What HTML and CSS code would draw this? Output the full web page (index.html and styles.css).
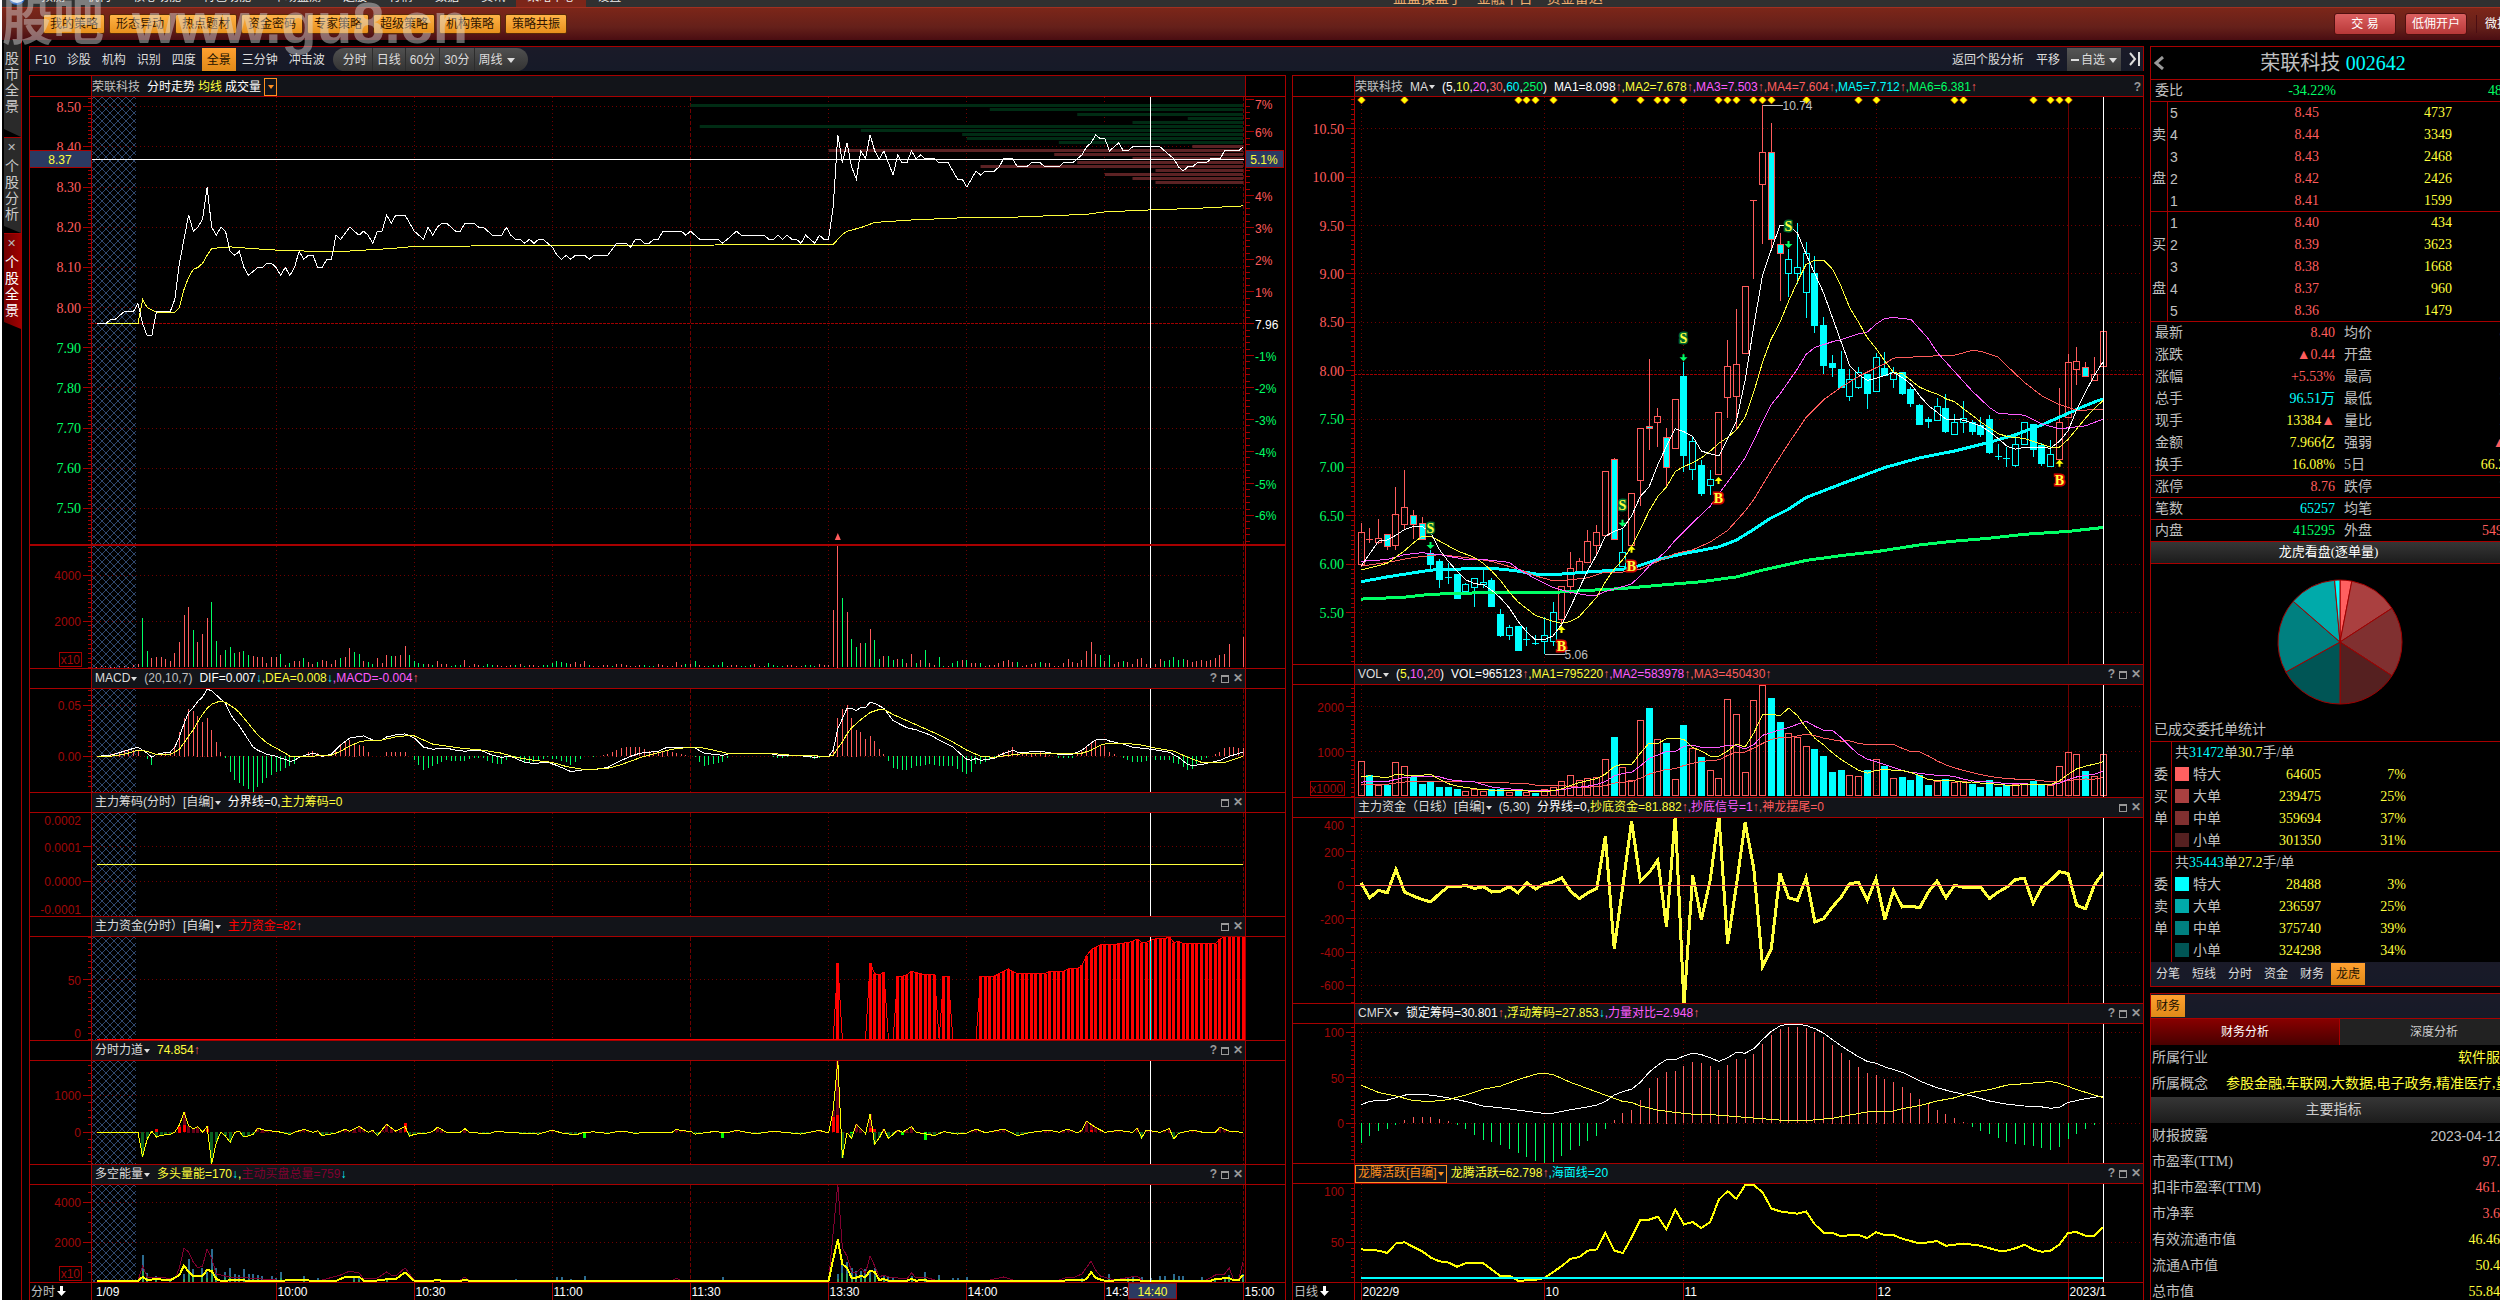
FILE: index.html
```html
<!DOCTYPE html>
<html lang="zh-CN">
<head>
    <meta charset="UTF-8">
    <meta name="viewport" content="width=device-width, initial-scale=1.0">
    <title>荣联科技 002642 - 个股全景</title>
    <link rel="stylesheet" href="styles.css">
</head>
<body>
    <nav class="menubar">
        <svg class="logo" viewBox="0 0 20 20"><circle cx="10" cy="10" r="9" fill="#1d5fc4"/><path d="M3 12q7 6 14 0" stroke="#e8f2ff" stroke-width="3" fill="none"/></svg>
        <a href="#">预测</a><a href="#">机构</a><a href="#">核心功能</a><a href="#">特色功能</a><a href="#">市场监测</a><a href="#">选股</a><a href="#">行情</a><a href="#">数据</a><a href="#">资讯</a><a href="#" class="current">策略中心</a><a href="#">设置</a>
        <span class="app-title">益盟操盘手　金融平台　资金雷达</span>
    </nav>

    <header class="banner">
        <div class="strategies">
            <button>我的策略</button><button>形态异动</button><button>热点题材</button><button>资金密码</button><button>专家策略</button><button>超级策略</button><button>机构策略</button><button>策略共振</button>
        </div>
        <div class="trade">
            <button>交 易</button><button>低佣开户</button><a href="#">微投顾</a>
        </div>
        <div class="watermark"><span>股吧</span><span>www.gu8.cn</span></div>
    </header>

    <div class="workspace">
        <aside class="side-tabs">
            <a href="#" class="side-tab first">股市全景</a>
            <a href="#" class="side-tab"><i>✕</i>个股分析</a>
            <a href="#" class="side-tab active"><i>✕</i>个股全景</a>
        </aside>

        <main class="main">
            <div class="toolbar">
                <a href="#">F10</a><a href="#">诊股</a><a href="#">机构</a><a href="#">识别</a><a href="#">四度</a><a href="#" class="on">全景</a><a href="#">三分钟</a><a href="#">冲击波</a>
                <div class="periods">
                    <button>分时</button><button>日线</button><button>60分</button><button>30分</button>
                    <span class="picker"><select aria-label="周期"><option>周线</option></select></span>
                </div>
                <div class="toolbar-right">
                    <a href="#">返回个股分析</a><a href="#">平移</a>
                    <span class="picker watch"><b></b><select aria-label="自选"><option>自选</option></select></span>
                    <button class="skip" aria-label="展开"><svg viewBox="0 0 12 14"><path d="M1 1l5 6-5 6M10 0v14" fill="none" stroke="#ddd" stroke-width="2"/></svg></button>
                </div>
            </div>

            <div class="charts">
                <section class="panel intraday">
                    <div class="title"><span class="dim">荣联科技</span><span class="gap w">分时走势</span><span class="y sp">均线</span><span class="w sp">成交量</span><button class="drop" aria-label="指标"></button></div>
                    <svg class="pane h447" id="price"></svg>
                    <svg class="pane vol h122" id="vol"></svg>
                    <div class="title"><span class="d">MACD</span><i class="caret"></i><span class="gap dim">(20,10,7)</span><span class="gap w">DIF=0.007</span><span class="c">↓</span><span class="y">,DEA=0.008</span><span class="c">↓</span><span class="m">,MACD=-0.004</span><span class="r">↑</span><div class="tools"><button>?</button><button class="max" aria-label="最大化"></button><button>✕</button></div></div>
                    <svg class="pane h103" id="macd"></svg>
                    <div class="title"><span class="d">主力筹码(分时）[自编]</span><i class="caret"></i><span class="gap w">分界线=0,</span><span class="y">主力筹码=0</span><div class="tools"><button class="max" aria-label="最大化"></button><button>✕</button></div></div>
                    <svg class="pane h103" id="chips"></svg>
                    <div class="title"><span class="d">主力资金(分时）[自编]</span><i class="caret"></i><span class="gap rr">主力资金=82</span><span class="r">↑</span><div class="tools"><button class="max" aria-label="最大化"></button><button>✕</button></div></div>
                    <svg class="pane h103" id="fund"></svg>
                    <div class="title"><span class="d">分时力道</span><i class="caret"></i><span class="gap y">74.854</span><span class="r">↑</span><div class="tools"><button>?</button><button class="max" aria-label="最大化"></button><button>✕</button></div></div>
                    <svg class="pane h103" id="force"></svg>
                    <div class="title"><span class="d">多空能量</span><i class="caret"></i><span class="gap y">多头量能=170</span><span class="c">↓</span><span class="y">,</span><span class="mr">主动买盘总量=759</span><span class="c">↓</span><div class="tools"><button>?</button><button class="max" aria-label="最大化"></button><button>✕</button></div></div>
                    <svg class="pane h97" id="energy"></svg>
                    <svg class="times" id="times"></svg>
                </section>

                <section class="panel daily">
                    <div class="title"><span class="dim">荣联科技</span><span class="gap d">MA</span><i class="caret"></i><span class="gap w">(5,<em class="y">10</em>,<em class="m">20</em>,<em class="r">30</em>,<em class="c">60</em>,<em class="g">250</em>)</span><span class="gap w">MA1=8.098</span><span class="r">↑</span><span class="y">,MA2=7.678</span><span class="r">↑</span><span class="m">,MA3=7.503</span><span class="r">↑,MA4=7.604↑</span><span class="c">,MA5=7.712</span><span class="r">↑</span><span class="g">,MA6=6.381</span><span class="r">↑</span><div class="tools"><button>?</button></div></div>
                    <svg class="pane h567" id="kline"></svg>
                    <div class="title"><span class="d">VOL</span><i class="caret"></i><span class="gap w">(<em class="y">5</em>,<em class="m">10</em>,<em class="r">20</em>)</span><span class="gap w">VOL=965123</span><span class="r">↑</span><span class="y">,MA1=795220</span><span class="r">↑</span><span class="m">,MA2=583978</span><span class="r">↑,MA3=450430↑</span><div class="tools"><button>?</button><button class="max" aria-label="最大化"></button><button>✕</button></div></div>
                    <svg class="pane h112" id="kvol"></svg>
                    <div class="title"><span class="d">主力资金（日线）[自编]</span><i class="caret"></i><span class="gap d">(5,30)</span><span class="gap w">分界线=0,</span><span class="y">抄底资金=81.882</span><span class="r">↑</span><span class="m">,抄底信号=1</span><span class="r">↑,神龙摆尾=0</span><div class="tools"><button class="max" aria-label="最大化"></button><button>✕</button></div></div>
                    <svg class="pane h185" id="kfund"></svg>
                    <div class="title"><span class="d">CMFX</span><i class="caret"></i><span class="gap w">锁定筹码=30.801</span><span class="r">↑</span><span class="y">,浮动筹码=27.853</span><span class="c">↓</span><span class="m">,力量对比=2.948</span><span class="r">↑</span><div class="tools"><button>?</button><button class="max" aria-label="最大化"></button><button>✕</button></div></div>
                    <svg class="pane h139" id="cmfx"></svg>
                    <div class="title"><button class="chosen">龙腾活跃[自编]<i class="caret"></i></button><span class="y">龙腾活跃=62.798</span><span class="r">↑</span><span class="c">,海面线=20</span><div class="tools"><button>?</button><button class="max" aria-label="最大化"></button><button>✕</button></div></div>
                    <svg class="pane h98" id="active"></svg>
                    <svg class="times" id="dates"></svg>
                </section>
            </div>
        </main>

        <aside class="quote">
            <section class="box">
                <div class="stock"><button class="back" aria-label="上一只"><svg viewBox="0 0 10 14"><path d="M9 1L2 7l7 6" fill="none" stroke="#999" stroke-width="3"/></svg></button><h1>荣联科技 <span>002642</span></h1></div>
                <table class="ratio ruled"><tr><td>委比</td><td class="g">-34.22%</td><td class="g">48652</td></tr></table>
                <table class="book ruled">
                    <tr><th></th><td>5</td><td>8.45</td><td>4737</td><td></td></tr>
                    <tr><th>卖</th><td>4</td><td>8.44</td><td>3349</td><td></td></tr>
                    <tr><th></th><td>3</td><td>8.43</td><td>2468</td><td></td></tr>
                    <tr><th>盘</th><td>2</td><td>8.42</td><td>2426</td><td></td></tr>
                    <tr><th></th><td>1</td><td>8.41</td><td>1599</td><td></td></tr>
                </table>
                <table class="book ruled">
                    <tr><th></th><td>1</td><td>8.40</td><td>434</td><td></td></tr>
                    <tr><th>买</th><td>2</td><td>8.39</td><td>3623</td><td></td></tr>
                    <tr><th></th><td>3</td><td>8.38</td><td>1668</td><td></td></tr>
                    <tr><th>盘</th><td>4</td><td>8.37</td><td>960</td><td></td></tr>
                    <tr><th></th><td>5</td><td>8.36</td><td>1479</td><td></td></tr>
                </table>
                <table class="detail">
                    <tr><th>最新</th><td class="r">8.40</td><th>均价</th><td class="r">8.25</td></tr>
                    <tr><th>涨跌</th><td class="r">▲0.44</td><th>开盘</th><td class="r">7.98</td></tr>
                    <tr><th>涨幅</th><td class="r">+5.53%</td><th>最高</th><td class="r">8.43</td></tr>
                    <tr><th>总手</th><td class="c">96.51万</td><th>最低</th><td class="g">7.93</td></tr>
                    <tr><th>现手</th><td class="y">13384<em class="r">▲</em></td><th>量比</th><td class="r">2.47</td></tr>
                    <tr><th>金额</th><td class="y">7.966亿</td><th>强弱</th><td class="r">▲6.1</td></tr>
                    <tr class="line"><th>换手</th><td class="y">16.08%</td><th>5日</th><td class="y">66.25%</td></tr>
                    <tr class="line"><th>涨停</th><td class="r">8.76</td><th>跌停</th><td class="g">7.16</td></tr>
                    <tr class="line"><th>笔数</th><td class="c">65257</td><th>均笔</th><td class="c">14.8</td></tr>
                    <tr class="line"><th>内盘</th><td class="g">415295</td><th>外盘</th><td class="r">549828</td></tr>
                </table>
                <h2 class="bar">龙虎看盘(逐单量)</h2>
                <div class="pie"><svg id="pie" viewBox="-63 -63 126 126"></svg></div>
                <h3>已成交委托单统计</h3>
                <table class="orders ruled">
                    <colgroup><col class="who"><col class="kind"><col class="lots"><col class="share"><col></colgroup>
                    <tr><th></th><td colspan="4" class="sum">共<em class="c">31472</em>单<em class="y">30.7</em>手/单</td></tr>
                    <tr><th>委</th><td><i class="sw b1"></i>特大</td><td>64605</td><td>7%</td><td></td></tr>
                    <tr><th>买</th><td><i class="sw b2"></i>大单</td><td>239475</td><td>25%</td><td></td></tr>
                    <tr><th>单</th><td><i class="sw b3"></i>中单</td><td>359694</td><td>37%</td><td></td></tr>
                    <tr><th></th><td><i class="sw b4"></i>小单</td><td>301350</td><td>31%</td><td></td></tr>
                </table>
                <table class="orders">
                    <colgroup><col class="who"><col class="kind"><col class="lots"><col class="share"><col></colgroup>
                    <tr><th></th><td colspan="4" class="sum">共<em class="c">35443</em>单<em class="y">27.2</em>手/单</td></tr>
                    <tr><th>委</th><td><i class="sw s1"></i>特大</td><td>28488</td><td>3%</td><td></td></tr>
                    <tr><th>卖</th><td><i class="sw s2"></i>大单</td><td>236597</td><td>25%</td><td></td></tr>
                    <tr><th>单</th><td><i class="sw s3"></i>中单</td><td>375740</td><td>39%</td><td></td></tr>
                    <tr><th></th><td><i class="sw s4"></i>小单</td><td>324298</td><td>34%</td><td></td></tr>
                </table>
                <div class="tabs"><a href="#">分笔</a><a href="#">短线</a><a href="#">分时</a><a href="#">资金</a><a href="#">财务</a><a href="#" class="on">龙虎</a></div>
            </section>

            <section class="box finance">
                <div class="tabs"><a href="#" class="on">财务</a></div>
                <div class="switch"><button class="active">财务分析</button><button>深度分析</button></div>
                <table class="facts about">
                    <tr><th>所属行业</th><td class="y">软件服务</td></tr>
                    <tr><th>所属概念</th><td class="y concepts">参股金融,车联网,大数据,电子政务,精准医疗,量子</td></tr>
                </table>
                <h2 class="bar tall">主要指标</h2>
                <table class="facts">
                    <tr><th>财报披露</th><td class="date">2023-04-12</td></tr>
                    <tr><th>市盈率(TTM)</th><td class="r">97.93</td></tr>
                    <tr><th>扣非市盈率(TTM)</th><td class="r">461.76</td></tr>
                    <tr><th>市净率</th><td class="r">3.692</td></tr>
                    <tr><th>有效流通市值</th><td class="y">46.46亿</td></tr>
                    <tr><th>流通A市值</th><td class="y">50.4亿</td></tr>
                    <tr><th>总市值</th><td class="y">55.84亿</td></tr>
                </table>
            </section>
        </aside>
    </div>

    <script src="charts.js"></script>
</body>
</html>
```
FILE: styles.css
```css
:root {
    --line: #a80000;
    --red: #ff5c5c;
    --green: #00ff66;
    --cyan: #00ffff;
    --yellow: #ffff3c;
    --magenta: #ff5cff;
    --dim: #c0c0c0;
    --sans: "Liberation Sans", "Noto Sans CJK SC", sans-serif;
    --serif: "Liberation Serif", "Noto Sans CJK SC", serif;
}

* {
    box-sizing: border-box;
}

body {
    margin: 0;
    height: 100vh;
    overflow: hidden;
    display: flex;
    flex-direction: column;
    background: #000;
    color: var(--dim);
    font: 12px/18px var(--sans);
    border-left: 2px solid #fff;
}

a {
    color: inherit;
    text-decoration: none;
}

button,
select {
    margin: 0;
    padding: 0;
    border: 0;
    background: none;
    color: inherit;
    font: inherit;
    appearance: none;
}

em,
i {
    font-style: normal;
}

.w { color: #fff; }
.d { color: #ddd; }
.dim { color: var(--dim); }
.y { color: var(--yellow); }
.r { color: var(--red); }
.g { color: var(--green); }
.c { color: var(--cyan); }
.m { color: var(--magenta); }
.rr { color: #ff0000; }
.mr { color: #800030; }

/* top bars */
.menubar {
    flex: none;
    height: 7px;
    display: flex;
    align-items: flex-end;
    overflow: hidden;
    background: #303030;
    color: #eee;
    line-height: 12px;
    padding-bottom: 4px;
    position: relative;
}

.logo {
    width: 18px;
    height: 18px;
    flex: none;
    margin: 0 0 -3px 6px;
}

.menubar a {
    padding: 0 11px;
}

.menubar a:first-of-type {
    margin-left: 4px;
}

.menubar .current {
    background: #7c2619;
    box-shadow: 0 4px #7c2619;
}

.app-title {
    position: absolute;
    left: 1390px;
    left: calc(55.6% + 2px);
    bottom: 3px;
    font-size: 14px;
    color: #f0b070;
}

.banner {
    flex: none;
    height: 33px;
    display: flex;
    justify-content: space-between;
    align-items: center;
    border-top: 1px solid #a03020;
    background: linear-gradient(#7c2619, #65201a 60%, #4a0d12);
    position: relative;
}

.strategies {
    display: flex;
    gap: 4px;
    padding-left: 41px;
}

.strategies button {
    width: 62px;
    height: 20px;
    border: 1px solid #5a2a08;
    border-radius: 2px;
    background: linear-gradient(#ffb347, #e8901c);
    color: #301400;
}

.trade {
    display: flex;
    align-items: center;
    gap: 9px;
    color: #fff;
    white-space: nowrap;
    width: 166px;
}

.trade button {
    flex: none;
    width: 62px;
    height: 22px;
    border: 1px solid #50100f;
    border-radius: 3px;
    background: linear-gradient(#dc6060, #b83838);
}

.trade a {
    border-left: 1px solid #4a0d12;
    padding-left: 8px;
}

.watermark {
    position: absolute;
    left: 0;
    top: -9px;
    display: flex;
    gap: 28px;
    font-weight: bold;
    font-size: 58px;
    line-height: 48px;
    color: rgba(220, 220, 220, 0.45);
    pointer-events: none;
    z-index: 2;
}

.watermark span:first-child {
    font-size: 51px;
}

/* body */
.workspace {
    flex: 1;
    min-height: 0;
    display: flex;
}

.side-tabs {
    flex: none;
    width: 20px;
    margin-right: 7px;
    padding-left: 2px;
    border-right: 1px solid var(--line);
}

.side-tab {
    display: block;
    height: 96px;
    padding: 20px 1px 0 0;
    background: #2a2a2a;
    border-top: 1px solid var(--line);
    clip-path: polygon(0 0, 100% 0, 100% 100%, 0 89px);
    font-size: 14px;
    line-height: 16px;
    text-align: center;
    word-break: break-all;
    color: #ccc;
    position: relative;
}

.side-tab.first {
    height: 97px;
    padding-top: 10px;
    border-top: 0;
}

.side-tab i {
    position: absolute;
    top: 1px;
    left: 3px;
    font-size: 11px;
    color: #bbb;
}

.side-tab.active {
    background: linear-gradient(90deg, #700000, #a00000);
    color: #fff;
}

.main {
    flex: 1;
    min-width: 0;
    display: flex;
    flex-direction: column;
    margin: 6px 6px 0 0;
}

.toolbar {
    flex: none;
    height: 25px;
    display: flex;
    align-items: center;
    background: linear-gradient(#1a1a28, #161a28);
    border: solid var(--line);
    border-width: 1px 1px 0;
    margin-bottom: 4px;
    color: #ddd;
}

.toolbar > a {
    padding: 2px 5px 0;
    line-height: 21px;
    margin-right: 1px;
}

.on {
    background: linear-gradient(#ffa030, #e08a18);
    color: #201000;
}

.periods {
    height: 23px;
    display: flex;
    align-items: center;
    margin-left: 2px;
    padding: 0 9px 0 1px;
    border-radius: 12px;
    background: linear-gradient(#505050, #333);
}

.periods button {
    height: 23px;
    padding: 2px 4px 0;
    border-right: 1px solid #2c2c2c;
}

.periods button:first-child {
    padding-left: 9px;
    padding-right: 5px;
}

.picker {
    display: flex;
    align-items: center;
    padding: 2px 4px 0;
}

.picker select {
    width: 26px;
}

.picker::after {
    content: "";
    border: 4px solid transparent;
    border-top: 5px solid #ddd;
    border-bottom: 0;
    margin-left: 2px;
}

.picker.watch {
    height: 23px;
    background: linear-gradient(#555, #3a3a3a);
}

.watch b {
    width: 8px;
    height: 2px;
    margin-right: 2px;
    background: #ddd;
}

.toolbar-right {
    margin-left: auto;
    display: flex;
    align-items: center;
}

.toolbar-right a {
    padding: 2px 12px 0 0;
}

.toolbar-right a + a {
    padding-right: 7px;
}

.skip {
    height: 14px;
    margin: 0 2px 0 8px;
}

.skip svg {
    display: block;
    width: 12px;
    height: 14px;
}

.charts {
    flex: 1;
    min-height: 0;
    display: grid;
    grid-template-columns: 1257fr 852fr;
    gap: 6px;
}

.panel {
    min-width: 0;
    display: flex;
    flex-direction: column;
    border: solid var(--line);
    border-width: 0 1px;
}

.title {
    flex: none;
    height: 21px;
    display: flex;
    align-items: center;
    margin: 0 0 0 61px;
    padding: 0 2px 0 3px;
    background: #121419;
    border: 1px solid var(--line);
    border-right: 0;
    line-height: 19px;
    white-space: pre;
    position: relative;
}

.title:first-child {
    height: 22px;
    padding-left: 0;
    padding-top: 2px;
}

/* rules run through the axis gutters too */
.title::before,
.title::after {
    content: "";
    position: absolute;
    top: -1px;
    bottom: -1px;
    left: -62px;
    width: 62px;
    border: solid var(--line);
    border-width: 1px 0;
}

.intraday .title {
    margin-right: 39px;
    border-right: 1px solid var(--line);
}

.intraday .title::after {
    left: auto;
    right: -40px;
    width: 39px;
}

.gap { margin-left: 7px; }
.sp { margin-left: 3px; }

.caret {
    border: 3px solid transparent;
    border-top: 4px solid #ddd;
    border-bottom: 0;
    margin-left: 1px;
}

.drop {
    width: 13px;
    height: 18px;
    margin-left: 3px;
    border: 1px solid #ff9020;
    display: grid;
    place-items: center;
}

.drop::after {
    content: "";
    border: 3px solid transparent;
    border-top: 4px solid #ff9020;
    border-bottom: 0;
}

.chosen {
    display: flex;
    align-items: center;
    height: 18px;
    margin: 0 4px 0 -3px;
    padding: 0 2px;
    border: 1px solid #ff9020;
    color: #ff9020;
}

.chosen .caret {
    border-top-color: #ff9020;
}

.tools {
    margin-left: auto;
    display: flex;
    align-items: center;
    gap: 4px;
    color: #999;
    font-weight: bold;
}

.max {
    width: 8px;
    height: 8px;
    border: 1px solid #999;
    border-top-width: 2px;
}

.pane {
    display: block;
    width: 100%;
    min-height: 0;
    flex-basis: 0;
}

.h447 { flex-grow: 447; }
.h122 { flex-grow: 122; }
.h103 { flex-grow: 103; }
.h97 { flex-grow: 97; }
.h567 { flex-grow: 567; }
.h112 { flex-grow: 112; }
.h185 { flex-grow: 185; }
.h139 { flex-grow: 139; }
.h98 { flex-grow: 98; }

.vol {
    border-top: 2px solid var(--line);
}

.times {
    flex: none;
    width: 100%;
    height: 18px;
    border-top: 1px solid var(--line);
}

svg text {
    font-family: var(--sans);
    font-size: 12px;
}

svg text.price {
    font-family: var(--serif);
    font-size: 14px;
}

svg text.signal {
    font-family: "Liberation Serif", serif;
    font-size: 14px;
    font-weight: bold;
}

/* quote column */
.quote {
    flex: none;
    width: 350px;
    padding-top: 6px;
    overflow: hidden;
}

.box {
    width: 378px;
    border: solid var(--line);
    border-width: 1px 0 1px 1px;
}

.stock {
    display: flex;
    align-items: center;
    height: 33px;
    border-bottom: 1px solid var(--line);
}

.back {
    width: 10px;
    height: 14px;
    margin-left: 3px;
}

.back svg {
    display: block;
}

h1 {
    flex: 1;
    margin: 0;
    padding-right: 26px;
    font: 20px/30px var(--sans);
    text-align: center;
}

h1 span {
    font-family: var(--serif);
    color: var(--cyan);
}

table {
    width: 100%;
    border-collapse: separate;
    border-spacing: 0;
    table-layout: fixed;
    font: 14px/20px var(--serif);
}

tr {
    height: 22px;
}

td,
th {
    padding: 0;
    font-weight: normal;
    white-space: nowrap;
}

.ruled tr:last-child > *,
.line > * {
    border-bottom: 1px solid var(--line);
}

.ratio td {
    text-align: right;
    padding-right: 5px;
}

.ratio td:first-child {
    text-align: left;
    padding-left: 4px;
    width: 60px;
}

.ratio td:nth-child(2) {
    width: 127px;
    padding-right: 2px;
}

.book th {
    width: 17px;
    border-right: 1px solid var(--line);
}

.book td {
    text-align: right;
    width: 133px;
    color: var(--yellow);
}

.book td:nth-child(2) {
    width: 18px;
    padding-left: 2px;
    text-align: left;
    color: var(--dim);
    font-family: var(--sans);
}

.book td:nth-child(3) {
    color: var(--red);
}

.book td:last-child {
    width: auto;
}

.detail th {
    width: 40px;
    padding-left: 4px;
    text-align: left;
}

.detail td {
    width: 144px;
    text-align: right;
}

.detail th:nth-child(3) {
    width: 60px;
    padding-left: 9px;
}

.detail td:last-child {
    width: auto;
    padding-right: 4px;
}

.bar {
    margin: 0;
    height: 22px;
    border-bottom: 1px solid var(--line);
    background: linear-gradient(#363636, #1c1c1c);
    color: #fff;
    font: 13px/20px var(--serif);
    text-align: center;
    padding-right: 22px;
}

.bar.tall {
    height: 26px;
    padding-right: 12px;
    border: 0;
    font-size: 14px;
    line-height: 25px;
    color: #ccc;
}

.pie {
    height: 156px;
    display: grid;
    place-items: center;
}

.pie svg {
    width: 126px;
    height: 126px;
}

h3 {
    margin: 0;
    padding-left: 3px;
    height: 22px;
    border-bottom: 1px solid var(--line);
    font: 14px/20px var(--serif);
}

.who { width: 21px; }
.kind { width: 65px; }
.lots { width: 84px; }
.share { width: 85px; }

.orders th {
    border-right: 1px solid var(--line);
}

.orders td {
    text-align: right;
    color: var(--yellow);
}

.orders td:nth-child(2) {
    padding-left: 3px;
    text-align: left;
    color: var(--dim);
}

.orders .sum {
    padding-left: 1px;
}

.sw {
    display: inline-block;
    width: 14px;
    height: 14px;
    margin-right: 4px;
    vertical-align: -2px;
}

.b1 { background: #ff6060; }
.b2 { background: #aa4040; }
.b3 { background: #803030; }
.b4 { background: #552020; }
.s1 { background: #00ffff; }
.s2 { background: #00aaaa; }
.s3 { background: #008080; }
.s4 { background: #005555; }

.tabs {
    display: flex;
    height: 24px;
    align-items: center;
    background: linear-gradient(#1a1a28, #161a28);
    color: #ddd;
}

.tabs a {
    margin-right: 2px;
    padding: 0 5px;
    line-height: 22px;
}

.finance {
    margin-top: 6px;
    border-bottom: 0;
}

.switch {
    display: flex;
    height: 27px;
    border-top: 1px solid var(--line);
}

.switch button {
    flex: 1;
    background: #222;
    color: #ccc;
}

.switch .active {
    background: linear-gradient(#880000, #480000);
    border-right: 1px solid var(--line);
    color: #fff;
}

.facts tr {
    height: 26px;
}

.facts th {
    width: 120px;
    text-align: left;
    padding-left: 1px;
}

.about th {
    width: 75px;
}

.facts td {
    text-align: right;
    padding-right: 14px;
}

.facts .date {
    padding-right: 26px;
    font-family: var(--sans);
}

.facts .concepts {
    padding: 0;
    text-align: left;
}
```
FILE: charts.js
```js
const RED = '#ff5c5c', GREEN = '#00ff66', CYAN = '#00ffff', YELLOW = '#ffff3c', MAGENTA = '#ff5cff';
const AXIS = '#a80000', GRID = '#700000', GUTTER = 61;

// "x:v x:v" -> [[x, v], ...]
const pairs = (s) => s.trim().split(/\s+/).map((p) => p.split(':').map(Number));

function at(points, x) {
    for (let k = 1; k < points.length; k++) {
        const [x0, v0] = points[k - 1], [x1, v1] = points[k];
        if (x <= x1) return v0 + (v1 - v0) * (x - x0) / (x1 - x0);
    }
    return points[points.length - 1][1];
}

// ---- intraday, x is minutes since 9:30 ----
const price = pairs(`-9:7.96 -7:7.96 -6:7.97 -5:7.97 -4:7.98 -3:7.99 -1:7.99 0:8.01 1:7.96 2:7.93 3:7.93 4:7.99 7:7.99 8:8.02 9:8.11 10:8.17 11:8.23 12:8.19 13:8.2 14:8.22 15:8.3 16:8.2 17:8.18 18:8.2 19:8.19 20:8.14 21:8.13 22:8.14 23:8.1 24:8.08 25:8.09 26:8.1 27:8.1 28:8.11 29:8.11 30:8.1 31:8.08 32:8.1 33:8.08 34:8.1 35:8.14 36:8.12 37:8.13 38:8.13 39:8.1 40:8.1 41:8.12 42:8.12 43:8.18 44:8.17 46:8.2 48:8.18 49:8.19 50:8.18 51:8.16 52:8.19 53:8.19 54:8.23 55:8.21 56:8.23 58:8.23 60:8.19 62:8.17 63:8.2 64:8.18 65:8.2 66:8.21 67:8.21 69:8.19 70:8.19 71:8.21 73:8.21 74:8.2 75:8.2 77:8.18 79:8.18 80:8.2 81:8.18 82:8.17 83:8.17 84:8.16 85:8.17 86:8.16 87:8.17 88:8.17 90:8.15 91:8.13 92:8.12 93:8.13 94:8.12 95:8.13 97:8.13 98:8.12 99:8.13 102:8.13 104:8.16 106:8.16 107:8.15 108:8.17 109:8.17 110:8.16 111:8.16 112:8.17 113:8.17 114:8.19 118:8.19 119:8.18 120:8.19 122:8.17 126:8.17 127:8.16 130:8.19 131:8.18 136:8.18 137:8.17 138:8.17 139:8.18 140:8.17 141:8.18 142:8.17 143:8.17 144:8.16 145:8.18 147:8.16 148:8.18 149:8.17 150:8.17 151:8.25 152:8.43 153:8.36 154:8.41 155:8.35 156:8.32 157:8.39 158:8.37 159:8.43 160:8.39 161:8.37 162:8.39 163:8.36 164:8.33 165:8.38 166:8.36 167:8.36 168:8.39 169:8.37 170:8.38 171:8.37 173:8.37 174:8.36 176:8.36 178:8.32 179:8.32 180:8.3 182:8.34 183:8.33 184:8.34 186:8.34 187:8.35 188:8.37 190:8.37 191:8.35 193:8.35 194:8.36 196:8.36 197:8.35 200:8.35 201:8.36 203:8.36 204:8.37 205:8.38 206:8.4 207:8.41 208:8.43 209:8.42 210:8.42 211:8.39 213:8.41 214:8.39 215:8.39 216:8.4 222:8.4 224:8.38 225:8.37 226:8.35 227:8.34 228:8.35 229:8.35 230:8.36 232:8.36 233:8.37 235:8.37 236:8.39 239:8.39 240:8.4`);
const average = pairs(`-9:7.96 0:7.96 1:8.02 2:8 4:7.988 8:7.988 9:8 10:8.045 11:8.075 12:8.095 13:8.1 14:8.11 15:8.13 16:8.147 20:8.151 26:8.146 30:8.143 38:8.14 45:8.14 55:8.147 60:8.152 90:8.155 120:8.155 134:8.157 151:8.157 152:8.17 153:8.182 154:8.19 157:8.199 160:8.212 168:8.218 180:8.224 190:8.225 206:8.232 210:8.238 220:8.243 230:8.247 240:8.253`);

// start minute of each price level's turnover bar, from 8.50 down in 0.01 steps
const levels = [120, 185, 204, 228, 216, 122, 157, 179, 180, 200, 229, 150, 199, 216, 204, 183, 221, 210, 216, 221];

// negative means a falling minute
const volume = pairs(`-1:90 0:130 1:-2150 2:-700 3:400 4:440 5:440 6:350 7:260 8:610 9:1090 10:2270 11:2620 12:-1610 13:1090 14:1450 15:2140 16:-2830 17:-1130 18:520 19:-740 20:-870 21:-610 22:650 23:-700 24:-520 25:480 26:440 27:440 28:190 29:440 30:440 31:-570 32:90 33:-180 34:260 35:260 36:-390 37:210 38:130 39:-210 40:300 41:260 42:130 43:300 44:-390 45:440 46:830 47:-650 48:-570 49:260 50:-210 51:-130 52:390 53:180 54:520 55:-480 56:480 57:520 58:915 59:-520 60:-260 61:-180 62:-130 63:130 64:-90 65:260 66:130 67:130 71:300 73:130 76:-130 81:90 83:130 88:-90 90:-180 91:-260 92:-210 93:-180 94:130 95:210 96:130 97:260 104:130 105:130 113:130 117:210 118:90 119:-130 120:130 121:-260 127:-210 134:130 137:-180 148:130 151:2490 152:5300 153:-3010 154:2400 155:-1220 156:-870 157:1050 158:-1050 159:1660 160:-1180 161:-350 162:480 163:-480 164:-300 165:350 166:-350 167:180 168:570 169:-180 170:300 171:-740 172:180 173:90 174:-440 177:-180 178:-260 179:300 180:-300 181:180 182:180 183:-180 187:180 188:260 189:300 190:210 191:-210 194:130 195:180 196:-210 197:180 198:180 201:180 202:350 203:210 204:180 205:300 206:700 207:1090 208:570 209:-520 210:260 211:-520 212:130 213:210 214:-260 215:210 216:130 217:350 218:390 219:130 220:260 221:130 222:350 223:-260 224:-300 225:-440 226:-300 227:-350 228:300 229:210 230:260 231:300 232:260 233:300 234:390 235:520 236:570 237:1000 238:0 239:0 240:1310`);

const dif = pairs(`-9:0 -6:1 -3:5 0:9 1:6 2:3 3:-1 4:2 5:3 7:4 8:9 9:19 10:32 11:43 12:48 13:54 14:58 15:66 16:64 18:56 19:52 20:42 21:35 22:30 23:23 24:16 25:9 26:6 28:2 30:0 31:-2 32:-3 33:-5 34:-4 35:-1 37:2 38:3 39:2 40:0 42:2 44:11 46:18 49:20 51:16 53:16 54:19 56:21 58:22 60:18 62:9 64:7 67:8 69:6 71:5 73:6 75:5 77:1 79:-1 81:0 84:-6 86:-7 89:-6 91:-9 94:-15 97:-13 99:-13 102:-11 104:-6 107:0 109:3 111:4 113:5 115:9 120:9 121:8 123:3 125:2 127:1 129:3 137:3 139:1 143:1 147:-1 149:0 150:0 151:6 152:27 153:37 154:47 155:47 156:45 157:48 158:48 159:53 160:52 162:47 163:41 164:35 167:28 169:26 172:21 174:16 177:9 178:5 180:-3 181:-4 182:-2 183:-4 186:-2 187:1 190:6 191:4 193:4 196:5 200:2 203:2 205:6 207:13 208:16 210:17 211:15 214:12 216:9 220:7 224:4 226:-1 228:-8 229:-9 231:-8 233:-6 235:-4 237:0 240:4`);
const dea = pairs(`-9:0 -6:0 -3:2 0:6 1:6 4:2 7:2 8:4 9:7 10:13 11:20 12:26 13:34 14:41 15:47 16:51 17:53 18:54 19:53 20:50 21:47 22:43 24:32 26:21 28:13 30:8 32:3 33:0 37:0 42:1 44:5 46:10 48:14 50:16 53:16 56:19 58:20 60:20 62:16 64:12 67:10 70:8 75:6 79:3 82:-1 86:-4 90:-6 93:-10 97:-13 102:-12 105:-8 108:-3 110:0 116:7 120:9 123:8 128:3 137:3 142:1 150:0 151:1 152:8 153:14 154:22 155:28 157:36 159:43 161:46 162:46 164:41 167:35 171:27 174:21 177:14 180:6 183:0 186:-1 189:1 193:3 205:3 207:6 209:11 211:13 214:13 218:11 221:8 225:5 228:-1 231:-6 236:-6 238:-3 240:0`);

const fund = pairs(`151:0 152:64 153:0 158:0 159:64 160:55 161:54 162:56 163:0 164:0 165:53 166:53 167:54 168:57 169:56 170:55 171:54 173:54 174:0 175:53 176:53 177:0 182:0 183:53 186:53 187:55 188:57 189:59 190:57 191:55 197:55 198:57 201:57 202:59 204:59 205:62 206:70 207:75 208:77 209:79 212:79 213:80 215:81 216:82 217:84 218:81 219:81 220:83 221:84 223:84 224:86 225:81 226:82 227:80 234:80 235:84 236:86 240:86`);

const force = pairs(`-9:0 0:0 1:-660 2:-180 3:30 4:-130 5:-80 7:-60 8:0 9:200 10:540 11:180 12:100 13:150 14:0 15:160 16:-850 17:-270 18:0 19:-100 20:-270 21:0 22:30 23:-130 25:-60 26:110 28:40 30:30 33:-60 34:0 36:80 38:0 39:40 40:-90 43:-20 45:80 46:30 48:160 50:0 51:50 52:-90 54:220 56:30 58:160 59:-110 60:-50 62:-40 64:20 65:140 67:0 70:0 71:100 72:0 76:-40 78:30 80:0 87:-50 90:60 92:-20 95:-70 97:0 99:10 102:-30 104:20 106:20 108:-30 110:0 112:-20 116:0 117:90 118:40 120:30 121:-50 125:20 128:-10 130:50 134:-40 138:30 144:-50 148:50 150:-20 151:600 152:1930 153:-690 154:-20 155:-160 156:220 157:100 158:-40 159:500 160:-320 161:-150 162:90 163:-170 165:60 166:0 168:150 169:0 171:-40 173:-90 175:20 178:-50 180:-20 182:90 184:-10 188:90 191:-90 194:0 198:60 200:0 202:90 204:-20 205:60 206:300 208:130 210:0 213:50 216:0 217:120 218:-150 219:60 222:0 224:100 225:-180 226:-30 229:60 232:-20 234:0 235:140 237:30 240:0`);
const forceHot = pairs(`4:90 9:150 10:200 15:80 58:240 151:400 152:480 155:-40 171:-220 127:-150 97:-150 159:120 160:90 166:-90 207:60`);

const bulls = pairs(`-9:60 0:60 1:250 2:100 4:150 7:80 9:350 10:820 11:500 12:300 14:300 15:600 16:550 17:150 18:60 22:100 24:60 35:80 43:60 45:250 48:270 49:60 53:80 54:150 56:150 58:480 60:60 64:60 65:110 66:60 70:60 71:110 72:60 150:60 151:1150 152:2120 153:900 154:700 155:220 156:220 157:300 158:250 159:570 160:500 161:100 162:150 163:60 167:60 168:150 169:60 170:100 172:60 201:60 202:110 205:80 206:150 207:500 208:200 210:60 217:110 218:60 233:60 234:150 237:200 238:80 239:80 240:350`);
const buying = pairs(`-9:60 0:60 1:800 2:250 4:250 8:150 9:700 10:1700 11:1500 12:1000 13:700 14:800 15:1650 16:1200 17:400 20:250 24:200 30:100 40:100 44:350 46:550 48:450 49:150 52:200 54:500 55:350 56:300 58:700 60:100 70:100 71:250 72:60 116:60 117:200 118:60 150:60 151:2500 152:4900 153:1700 154:1300 155:500 156:450 157:700 158:450 159:1300 160:800 161:250 162:350 163:250 167:150 168:450 169:200 171:250 173:100 185:100 188:250 190:100 200:100 202:250 203:200 205:400 207:1050 208:600 209:300 212:100 217:300 218:100 232:100 234:350 236:400 237:700 238:100 239:100 240:1000`);
const selling = pairs(`1:1350 2:450 4:300 7:200 10:400 11:1150 12:650 14:700 15:500 16:1650 17:700 19:500 20:700 21:400 22:350 23:650 24:400 25:400 26:350 27:300 29:300 30:200 31:500 36:300 39:200 47:300 48:250 54:200 82:150 91:250 92:250 94:150 97:300 127:250 152:400 153:1100 154:1000 155:700 156:550 157:550 158:650 159:500 160:700 162:300 163:300 164:200 168:300 171:500 174:350 177:200 178:200 180:250 205:200 211:400 215:200 216:250 218:250 220:200 222:300 223:300 225:400 226:300 227:300 231:250 234:200 236:200 237:350 240:400`);

// ---- daily ----
// kind top bottom high low; r hollow red, c solid cyan, h hollow cyan, m cyan with a red outline
const candles = `r 6.33 6 6.43 6|r 6.26 6.26 6.37 6.22|r 6.27 6.23 6.47 6.21|m 6.31 6.18 6.31 6.15|r 6.51 6.19 6.8 6.15|r 6.59 6.41 6.97 6.36|m 6.5 6.41 6.56 6.26|m 6.42 6.26 6.49 6.26|c 6.11 6 6.15 5.95|c 6.03 5.84 6.05 5.75|c 5.86 5.86 6.01 5.8|c 5.89 5.65 5.89 5.65|h 5.79 5.72 5.81 5.68|h 5.85 5.76 5.85 5.56|h 5.81 5.79 5.95 5.76|c 5.83 5.56 5.86 5.56|c 5.48 5.26 5.54 5.25|h 5.35 5.26 5.37 5.22|c 5.36 5.11 5.36 5.11|c 5.22 5.22 5.35 5.16|c 5.18 5.18 5.27 5.17|h 5.26 5.2 5.46 5.07|h 5.5 5.2 5.61 5.16|r 5.77 5.43 5.77 5.38|r 5.96 5.77 6.13 5.69|r 6.03 5.91 6.06 5.91|r 6.24 6.02 6.35 6.02|r 6.33 6.19 6.41 6.11|r 6.96 6.3 6.96 6.3|m 7.08 6.26 7.1 6.26|h 6.12 5.98 6.38 5.98|r 6.73 6.19 6.73 6.19|r 7.4 6.87 7.4 6.6|m 7.42 7.4 8.12 7.18|r 7.53 7.46 7.61 7.21|m 7.31 7 7.41 6.8|r 7.7 7.2 7.7 7.19|c 7.94 7.12 8.09 6.95|h 7.27 6.98 7.32 6.87|c 7.02 6.73 7.08 6.71|h 6.88 6.81 6.97 6.72|r 7.57 6.93 7.57 6.93|r 8.04 7.72 8.32 7.51|r 8.06 7.73 8.64 7.39|r 8.87 8.18 8.87 8.18|r 9.76 9.76 9.76 8.95|r 10.25 9.92 10.74 9.31|m 10.25 9.36 10.56 9.24|m 9.3 9.21 9.42 8.72|h 9.15 9 9.26 8.76|h 9.07 9 9.53 8.9|h 9.21 8.81 9.33 8.54|c 9 8.47 9.18 8.39|c 8.47 8.05 8.55 7.97|c 8.07 8.03 8.16 7.93|c 8.01 7.83 8.2 7.83|h 7.91 7.73 8.02 7.69|h 7.98 7.83 8.04 7.81|c 7.96 7.76 7.96 7.6|h 8.14 7.78 8.18 7.78|c 8.02 7.95 8.19 7.95|h 7.98 7.91 8.04 7.82|c 7.98 7.76 7.98 7.75|c 7.81 7.66 7.83 7.63|c 7.64 7.44 7.66 7.44|c 7.5 7.48 7.52 7.41|h 7.63 7.49 7.72 7.49|c 7.61 7.37 7.76 7.36|h 7.47 7.34 7.55 7.34|h 7.51 7.47 7.69 7.36|c 7.46 7.37 7.49 7.34|c 7.43 7.34 7.52 7.32|c 7.5 7.16 7.54 7.14|c 7.11 7.11 7.24 7.08|c 7.09 7.09 7.21 7.01|h 7.24 7.02 7.33 7.01|h 7.46 7.24 7.47 7.24|c 7.44 7.19 7.44 7.11|c 7.23 7.04 7.25 7.02|h 7.13 7.01 7.28 7.01|r 7.47 7.08 7.82 7.08|r 8.08 7.52 8.17 7.52|r 8.1 8.01 8.24 7.85|m 8.03 7.94 8.09 7.93|r 7.96 7.9 8.14 7.89|r 8.4 8.04 8.4 8.04`.split('|').map((s) => s.split(' ').map((v, k) => (k ? Number(v) : v)));
const ma5 = pairs(`0:5.98 2:6.24 3:6.25 4:6.3 5:6.36 6:6.39 7:6.39 8:6.33 9:6.15 10:6.03 11:5.93 12:5.84 13:5.8 14:5.79 15:5.73 16:5.65 17:5.55 18:5.41 19:5.3 20:5.22 21:5.22 22:5.26 23:5.38 24:5.56 25:5.75 26:5.94 27:6.1 28:6.29 29:6.34 30:6.37 31:6.5 32:6.7 33:6.8 34:7.03 35:7.22 36:7.4 37:7.37 38:7.32 39:7.17 40:7.14 41:7.12 42:7.3 43:7.48 44:7.9 45:8.46 46:8.99 47:9.25 48:9.5 49:9.51 50:9.42 51:9.2 52:9 53:8.8 54:8.55 55:8.3 56:8.05 57:7.96 58:7.9 59:7.92 60:7.95 61:7.98 62:7.93 63:7.86 64:7.74 65:7.64 66:7.57 67:7.5 69:7.49 70:7.46 71:7.43 72:7.37 73:7.3 74:7.22 75:7.19 76:7.21 79:7.2 80:7.27 81:7.38 82:7.6 83:7.78 84:7.95 85:8.09`);
const ma10 = pairs(`0:5.94 3:6.01 5:6.14 6:6.22 7:6.29 8:6.29 9:6.24 11:6.14 13:6.07 14:6.01 15:5.93 16:5.83 17:5.71 18:5.61 19:5.54 20:5.47 22:5.41 23:5.39 24:5.41 25:5.46 26:5.56 27:5.66 28:5.82 29:5.95 30:6.05 31:6.18 32:6.36 33:6.55 34:6.7 35:6.8 36:6.96 37:7.01 38:7.05 39:7.1 40:7.17 41:7.25 42:7.31 43:7.39 44:7.52 45:7.78 46:8.09 47:8.33 48:8.5 49:8.72 50:8.92 51:9.1 52:9.14 53:9.14 54:9.05 55:8.87 56:8.65 57:8.5 58:8.34 59:8.23 60:8.1 61:7.98 62:7.97 63:7.9 64:7.83 65:7.79 66:7.76 67:7.71 68:7.68 69:7.61 70:7.54 71:7.47 72:7.41 73:7.35 74:7.32 76:7.3 77:7.27 78:7.24 79:7.21 80:7.21 81:7.29 82:7.4 83:7.51 84:7.61 85:7.69`);
const ma20 = pairs(`0:6.03 3:6.05 5:6.1 7:6.12 9:6.1 12:6.05 14:6.05 17:6.02 18:5.95 20:5.85 22:5.76 24:5.71 26:5.68 27:5.68 28:5.72 30:5.77 31:5.8 32:5.88 33:5.98 35:6.14 36:6.25 38:6.43 40:6.6 41:6.73 42:6.85 43:6.97 44:7.1 45:7.28 46:7.47 47:7.65 48:7.76 50:8.02 51:8.17 52:8.24 54:8.3 55:8.32 57:8.38 58:8.4 59:8.48 60:8.54 61:8.55 63:8.53 64:8.43 65:8.33 66:8.19 68:7.99 70:7.79 72:7.62 73:7.56 76:7.54 78:7.45 80:7.4 83:7.43 85:7.5`);
const ma30 = pairs(`0:5.98 3:6.02 6:6.07 9:6.1 12:6.07 15:6.03 18:5.95 20:5.88 22:5.83 24:5.84 26:5.86 28:5.92 30:5.92 32:5.95 34:6.03 36:6.11 38:6.15 40:6.23 42:6.35 44:6.55 45:6.67 46:6.82 47:6.97 49:7.25 51:7.52 53:7.7 55:7.83 57:7.94 59:8.03 60:8.07 61:8.13 63:8.14 65:8.15 68:8.16 70:8.21 71:8.2 73:8.14 74:8.05 76:7.88 78:7.74 80:7.65 82:7.59 85:7.6`);
const ma60 = pairs(`0:5.82 3:5.87 8:5.94 14:5.96 16:5.95 18:5.93 20:5.9 23:5.9 26:5.92 29:5.94 31:5.96 34:6.05 37:6.11 41:6.18 43:6.25 45:6.36 47:6.48 49:6.57 51:6.69 55:6.83 60:7 64:7.1 68:7.17 72:7.26 75:7.34 78:7.44 81:7.56 83:7.64 85:7.71`);
const ma250 = pairs(`0:5.64 5:5.66 8:5.69 15:5.71 22:5.71 26:5.73 30:5.75 35:5.79 39:5.82 43:5.87 46:5.94 51:6.04 55:6.09 59:6.13 64:6.2 68:6.24 72:6.27 76:6.31 81:6.34 85:6.38`);
const events = [0, 5, 18, 19, 20, 22, 29, 32, 34, 35, 37, 41, 42, 43, 45, 46, 47, 51, 57, 59, 68, 69, 77, 79, 80, 81];
// day, letter price, arrow price
const sells = [[8, 6.37, 6.2], [30, 6.61, 6.43], [37, 8.34, 8.14], [49, 9.49, 9.31]];
const buys = [[23, 5.16, 5.32], [31, 5.98, 6.15], [41, 6.69, 6.86], [80, 6.87, 7.04]];

const dayVolume = [780, -460, 250, -240, 770, 680, -420, -280, -310, -215, -215, -170, 125, 150, 125, -150, -170, 100, -125, 100, -60, 165, 215, 335, 480, 365, 410, 425, 835, -1310, 655, 350, 1685, -1960, 1260, -1180, 390, -1580, 1060, -865, 590, 410, 2155, 1820, 545, 2135, 2480, -2185, -1650, 1395, 1305, 1105, -1045, -890, -530, -575, 480, 455, -575, 835, -665, 410, -420, -370, -460, -240, 335, -390, 315, 330, -260, -215, -350, -215, -240, 260, 260, -330, -240, 240, 680, 990, 940, -550, 455, 940];
const dayFund = [15, -75, -30, -45, 95, -40, -65, -85, -100, -50, -8, -10, 0, -20, -8, -40, -35, -8, -45, 15, -22, 8, 20, 45, -35, -80, -45, -20, 295, -380, 0, 385, 25, 75, 150, -250, 420, -720, 60, -205, 30, 420, -350, 0, 375, 100, -485, -380, 70, -75, -90, 45, -220, -200, -130, -70, 10, 18, -90, 38, -205, -30, -130, -125, -135, -40, 25, -75, 0, -12, -15, -12, -80, -40, -10, 35, 42, -108, -10, 30, 82, 70, -120, -140, 0, 75];
const locked = pairs(`0:20.5 1:24 2:25.5 3:25.5 4:28 5:31 6:32 8:31 10:28 12:24 14:19 16:17 18:14.5 20:12 21:11 22:11 24:15 26:18 27:20 28:24 29:31 30:35 31:37.5 32:45 33:56 34:64 35:70 36:70 37:74 38:77 39:75.5 40:72 41:68 42:72 43:78 44:77 45:82 46:92 47:101 48:107 49:109 50:109 51:107.5 52:104 53:99 54:92 55:85 56:79 57:73 58:68 59:66 60:62 62:56 64:46.5 66:39 68:34 70:30 72:24.5 74:21 76:19 78:18 79:16.5 80:17.5 81:23 83:27 85:30`);
const floating = pairs(`0:42 2:34 4:30 6:25 8:24 10:26 12:31 14:37.5 16:41 18:48 20:54 21:55 22:53.5 24:45 26:38 28:31 29:27.5 30:24 31:23 32:19 34:14.5 36:12 38:10 41:9 44:6.5 48:3.5 51:3 54:5.5 56:9 58:12.5 60:13 61:13.5 62:16 64:19.5 66:24.5 68:28 70:34 72:37 74:42 76:43.5 78:45 79:46 80:44 82:37 84:31 85:28.5`);
const active = pairs(`0:44 2:43 3:41 4:49 5:50 6:46 7:42.5 8:37 9:34 10:33 11:29.5 12:32.5 14:32.5 15:27 16:21.5 17:22 18:17.5 20:18.5 21:20 23:30 24:36 25:37.5 26:43 27:44 28:58 29:43 30:41 31:54 32:69 33:69 34:71.5 35:61 36:77.5 37:65 38:67 39:62 40:67 41:86 42:93 43:86.5 44:98 45:98 46:92 47:78.5 48:76 50:74 51:76 52:65 53:58 54:58 55:55 56:56 57:56 58:53.5 59:58.5 60:56 61:56 62:53 64:49 66:51 67:47 69:49 71:47 73:43 74:43 75:45 76:48 77:44 78:42 79:43 80:48 81:58 82:58.5 83:55.5 84:55.5 85:62.5`);

// ---- drawing ----
function el(parent, name, attrs, text) {
    const node = document.createElementNS('http://www.w3.org/2000/svg', name);
    for (const k in attrs) node.setAttribute(k, attrs[k]);
    if (text !== undefined) node.textContent = text;
    parent.appendChild(node);
    return node;
}

function xScale(svg) {
    const w = svg.clientWidth;
    return svg.closest('.intraday')
        ? { w, end: w - 39, x: (i) => 108 + (w - 150) * i / 240 }
        : { w, end: w, x: (i) => 68 + (w - 108) * i / 85 };
}

function line(svg, x1, y1, x2, y2, stroke, dash, width = 1) {
    const a = { x1, y1, x2, y2, stroke, 'stroke-width': width, 'shape-rendering': 'crispEdges' };
    if (dash) a['stroke-dasharray'] = dash;
    return el(svg, 'line', a);
}

const px = (v) => Math.floor(v) + 0.5;

// opts: top, bottom (values at the edges), minor step, labels [value, text, colour, no rule]
function pane(id, opts) {
    const svg = document.getElementById(id);
    svg.replaceChildren();
    const { w, end, x } = xScale(svg);
    const h = svg.clientHeight;
    const y = (v) => (opts.top - v) / (opts.top - opts.bottom) * h;
    const intraday = end < w;
    const p = { svg, w, h, end, x, y };

    if (intraday) {
        const pattern = el(el(svg, 'defs', {}), 'pattern', { id: 'hatch-' + id, width: 8, height: 8, patternUnits: 'userSpaceOnUse' });
        el(pattern, 'path', { d: 'M0 0L8 8M8 0L0 8', stroke: '#30486e', 'stroke-width': 1, 'shape-rendering': 'crispEdges' });
        el(svg, 'rect', { x: GUTTER + 1, y: 0, width: x(0) - GUTTER - 3, height: h, fill: `url(#hatch-${id})` });
        for (let m = 30; m <= 240; m += 30) line(svg, px(x(m)), 0, px(x(m)), h, GRID, m % 120 ? '1 3' : '4 2');
    } else {
        [0, 21, 37, 59].forEach((d) => line(svg, px(x(d)), 0, px(x(d)), h, GRID, '1 3'));
        line(svg, px(x(81)), 0, px(x(81)), h, GRID);
    }

    line(svg, GUTTER + 0.5, 0, GUTTER + 0.5, h, AXIS);
    if (intraday) line(svg, end - 0.5, 0, end - 0.5, h, AXIS);
    for (let k = Math.ceil(opts.bottom / opts.minor); k * opts.minor < opts.top; k++) {
        line(svg, GUTTER - 3, px(y(k * opts.minor)), GUTTER, px(y(k * opts.minor)), AXIS);
    }
    for (const [v, text, color, bare] of opts.labels) {
        const ty = Math.round(Math.min(Math.max(y(v), 7), h - 7));
        if (!bare) {
            line(svg, GUTTER - 8, px(y(v)), GUTTER, px(y(v)), AXIS);
            line(svg, GUTTER + 1, px(y(v)), end - 2, px(y(v)), GRID, '1 3');
        }
        el(svg, 'text', { x: GUTTER - 10, y: ty + 5, 'text-anchor': 'end', fill: color || '#a00808', class: opts.price ? 'price' : '' }, text);
    }
    return p;
}

function unit(p, text) {
    const w = text.length * 6 + 3;
    el(p.svg, 'rect', { x: GUTTER - 10.5 - w, y: p.h - 15.5, width: w + 1, height: 14, fill: 'none', stroke: AXIS, 'shape-rendering': 'crispEdges' });
    el(p.svg, 'text', { x: GUTTER - 11, y: p.h - 4, 'text-anchor': 'end', fill: '#a00808' }, text);
}

function curve(p, points, stroke, width = 1) {
    const d = points.map(([i, v]) => `${p.x(i).toFixed(1)},${p.y(v).toFixed(1)}`).join(' ');
    el(p.svg, 'polyline', { points: d, fill: 'none', stroke, 'stroke-width': width, 'shape-rendering': 'crispEdges' });
}

function bar(p, i, from, to, fill, width = 1) {
    const a = p.y(Math.max(from, to)), b = p.y(Math.min(from, to));
    el(p.svg, 'rect', { x: Math.floor(p.x(i) - (width - 1) / 2), y: Math.round(a), width, height: Math.max(1, Math.round(b - a)), fill });
}

function cross(p, i) {
    line(p.svg, px(p.x(i)), 0, px(p.x(i)), p.h, '#fff');
}

function drawIntraday() {
    const labels = [];
    for (let k = 0; k <= 10; k++) {
        const v = 8.5 - k / 10;
        labels.push([v, v.toFixed(2), v > 7.95 ? RED : GREEN]);
    }
    let p = pane('price', { top: 8.5241, bottom: 7.4114, minor: 0.01, labels, price: true });
    levels.forEach((m, k) => {
        const x = p.x(m);
        el(p.svg, 'rect', { x, y: Math.round(p.y(8.503 - k * 0.01)) - 1, width: p.x(240) - x, height: 3, fill: k < 10 ? '#002c14' : '#5c2224' });
    });
    line(p.svg, GUTTER, px(p.y(7.96)), p.end, px(p.y(7.96)), '#a00000', '3 1');
    for (let k = -34; k <= 35; k++) {
        const y = px(p.y(7.96 * (1 + k / 500)));
        line(p.svg, p.end, y, p.end + (k % 5 ? 4 : 8), y, AXIS);
    }
    for (let k = -6; k <= 7; k++) {
        if (k === 5) continue;
        const y = Math.max(p.y(7.96 * (1 + k / 100)), 7);
        el(p.svg, 'text', { x: p.end + 9, y: Math.round(y) + 5, fill: k > 0 ? RED : k < 0 ? GREEN : '#fff' }, k ? k + '%' : '7.96');
    }
    curve(p, average, YELLOW);
    curve(p, price, '#fff');
    const y = px(p.y(8.369));
    line(p.svg, GUTTER, y, p.end - 2, y, '#fff');
    [[-0.5, GUTTER + 1, '8.37', 30], [p.end - 0.5, 38, '5.1%', p.end + 18]].forEach(([x, width, text, tx]) => {
        el(p.svg, 'rect', { x, y: y - 9, width, height: 17, fill: '#2b3a62', stroke: AXIS });
        el(p.svg, 'text', { x: tx, y: y + 4, 'text-anchor': 'middle', fill: YELLOW }, text);
    });
    const sx = p.x(152);
    el(p.svg, 'path', { d: `M${sx - 3} ${p.h - 4}l3 -7 3 7z`, fill: RED });
    cross(p, 220);

    p = pane('vol', { top: 5285, bottom: -35, minor: 200, labels: [[4000, '4000'], [2000, '2000']] });
    const known = new Map(volume);
    for (let i = -9; i <= 240; i++) {
        let v = known.get(i);
        if (v === undefined) v = (50 + (i * 7 % 4) * 15) * (i > 0 && i * 13 % 7 < 3 ? -1 : 1);
        if (v) bar(p, i, 0, Math.abs(v), v > 0 ? RED : GREEN);
    }
    unit(p, 'x10');
    cross(p, 220);

    p = pane('macd', { top: 66, bottom: -35, minor: 5, labels: [[50, '0.05'], [0, '0.00']] });
    for (let i = -9; i <= 240; i++) {
        const v = 2 * (at(dif, i) - at(dea, i));
        if (Math.abs(v) > 0.6) bar(p, i, 0, v, v > 0 ? RED : GREEN);
    }
    curve(p, dif, '#fff');
    curve(p, dea, YELLOW);
    cross(p, 220);

    p = pane('chips', { top: 1.974, bottom: -1.003, minor: 10, labels: [[2, '0.0002', '', true], [1, '0.0001'], [0, '0.0000'], [-1, '-0.0001', '', true]] });
    curve(p, [[-9, 0.5], [240, 0.5]], YELLOW);
    cross(p, 220);

    p = pane('fund', { top: 85.6, bottom: -0.3, minor: 5, labels: [[50, '50'], [0, '0', '', true]] });
    for (let i = 152; i <= 240; i++) if (at(fund, i) > 1) bar(p, i, 0, at(fund, i), '#f00', 3);
    curve(p, fund, '#f00');
    curve(p, [[-9, 0.3], [240, 0.3]], '#f00');
    cross(p, 220);
    line(p.svg, px(p.x(220)), p.y(82), px(p.x(220)), p.h, CYAN);

    p = pane('force', { top: 1927, bottom: -857, minor: 200, labels: [[1000, '1000'], [0, '0']] });
    for (let i = 1; i <= 240; i++) {
        const v = at(force, i);
        if (Math.abs(v) > 20) bar(p, i, 0, v, v > 0 ? '#680018' : '#086020', 3);
    }
    forceHot.forEach(([i, v]) => bar(p, i, 0, v, v > 0 ? '#f00' : '#0f0', 3));
    curve(p, force, '#ff0');
    cross(p, 220);

    p = pane('energy', { top: 4865, bottom: 0, minor: 500, labels: [[4000, '4000'], [2000, '2000']] });
    selling.forEach(([i, v]) => {
        bar(p, i, 0, v, '#2c6c90', 2);
        bar(p, i, 0, v * 0.4, '#30a060', 2);
    });
    curve(p, buying, '#800030');
    curve(p, bulls, '#ff0', 2);
    unit(p, 'x10');
    cross(p, 220);

    const t = document.getElementById('times');
    t.replaceChildren();
    const { x } = xScale(t);
    foot(t, '分时', x, [[30, '10:00'], [60, '10:30'], [90, '11:00'], [120, '11:30'], [150, '13:30'], [180, '14:00'], [210, '14:3'], [240, '15:00']]);
    el(t, 'text', { x: GUTTER + 5, y: 13, fill: '#fff' }, '1/09');
    el(t, 'rect', { x: px(x(220)) - 22, y: 0, width: 48, height: 16, fill: '#2b3a62', stroke: AXIS });
    el(t, 'text', { x: px(x(220)) + 2, y: 13, 'text-anchor': 'middle', fill: YELLOW }, '14:40');
}

function foot(svg, name, x, marks) {
    el(svg, 'text', { x: 1, y: 13, fill: '#c0c0c0' }, name);
    el(svg, 'path', { d: 'M30 3h3v5h3l-4.500 5 -4.500 -5h3z', fill: '#fff' });
    line(svg, GUTTER + 0.5, 0, GUTTER + 0.5, 18, AXIS);
    marks.forEach(([i, text]) => {
        line(svg, px(x(i)), 0, px(x(i)), 18, AXIS);
        el(svg, 'text', { x: px(x(i)) + 1, y: 13, fill: '#fff' }, text);
    });
}

function meanOf(values, n, pad) {
    const all = Array(n).fill(pad).concat(values);
    return values.map((_, i) => [i, all.slice(i + 1, i + n + 1).reduce((a, b) => a + b, 0) / n]);
}

function drawDaily() {
    const labels = [];
    for (let v = 10.5; v > 5; v -= 0.5) labels.push([v, v.toFixed(2), v > 7.96 ? RED : GREEN]);
    let p = pane('kline', { top: 10.8275, bottom: 4.97, minor: 0.05, labels, price: true });
    line(p.svg, GUTTER, px(p.y(7.96)), p.end, px(p.y(7.96)), '#a00000', '3 1');
    candles.forEach(([kind, top, bottom, high, low], i) => {
        const c = kind === 'r' || kind === 'm' ? RED : CYAN;
        const x = px(p.x(i)), a = px(p.y(top)), b = px(p.y(bottom));
        line(p.svg, x, p.y(high), x, a, c);
        line(p.svg, x, b, x, p.y(low), c);
        el(p.svg, 'rect', {
            x: x - 3, y: a, width: 6, height: Math.max(b - a, 0.1), stroke: c,
            fill: kind === 'r' || kind === 'h' ? 'none' : CYAN, 'shape-rendering': 'crispEdges'
        });
    });
    curve(p, ma250, GREEN, 3);
    curve(p, ma60, CYAN, 3);
    curve(p, ma30, RED);
    curve(p, ma20, MAGENTA);
    curve(p, ma10, YELLOW);
    curve(p, ma5, '#fff');
    events.forEach((d) => {
        const x = px(p.x(d));
        el(p.svg, 'path', { d: `M${x - 4} 3l4 -4 4 4 -4 4z`, fill: '#ffff00', stroke: '#c00000', 'stroke-width': 0.5 });
    });
    const mark = (d, v, arrow, letter, fill, edge, tip, dir) => {
        const x = px(p.x(d)), y = p.y(arrow);
        el(p.svg, 'text', { x, y: p.y(v) + 5, 'text-anchor': 'middle', fill, stroke: edge, 'stroke-width': 3, 'paint-order': 'stroke', class: 'signal' }, letter);
        el(p.svg, 'path', { d: `M${x} ${y + 4 * dir}l-4 ${-4 * dir}h3v${-3 * dir}h2v${3 * dir}h3z`, fill: tip });
    };
    sells.forEach(([d, v, a]) => mark(d, v, a, 'S', YELLOW, '#006a30', GREEN, 1));
    buys.forEach(([d, v, a]) => mark(d, v, a, 'B', YELLOW, '#d00000', '#ffff00', -1));
    const peak = px(p.x(46)), low = px(p.x(21));
    line(p.svg, peak, px(p.y(10.74)), peak + 20, px(p.y(10.74)), '#c0c0c0');
    el(p.svg, 'text', { x: peak + 20, y: p.y(10.74) + 5, fill: '#c0c0c0' }, '10.74');
    line(p.svg, low, px(p.y(5.07)), low + 20, px(p.y(5.07)), '#c0c0c0');
    el(p.svg, 'text', { x: low + 20, y: p.y(5.06) + 4, fill: '#c0c0c0' }, '5.06');
    cross(p, 85);

    p = pane('kvol', { top: 2482, bottom: -7, minor: 100, labels: [[2000, '2000'], [1000, '1000']] });
    dayVolume.forEach((v, i) => {
        const x = px(p.x(i)), y = px(p.y(Math.abs(v)));
        el(p.svg, 'rect', { x: x - 3, y, width: 6, height: px(p.y(0)) - 1 - y, stroke: v > 0 ? RED : CYAN, fill: v > 0 ? 'none' : CYAN, 'shape-rendering': 'crispEdges' });
    });
    const size = dayVolume.map(Math.abs);
    curve(p, meanOf(size, 20, 240), RED);
    curve(p, meanOf(size, 10, 270), MAGENTA);
    curve(p, meanOf(size, 5, 360), YELLOW);
    unit(p, 'x1000');
    cross(p, 85);

    p = pane('kfund', { top: 403, bottom: -705, minor: 50, labels: [[400, '400', '', true], [200, '200'], [0, '0'], [-200, '-200'], [-400, '-400'], [-600, '-600']] });
    curve(p, dayFund.map((v, i) => [i, v]), YELLOW, 3);
    line(p.svg, GUTTER + 1, px(p.y(0)), p.x(85), px(p.y(0)), RED);
    cross(p, 85);

    p = pane('cmfx', { top: 109.1, bottom: -43.6, minor: 5, labels: [[100, '100'], [50, '50'], [0, '0']] });
    for (let i = 0; i < 85; i++) {
        const v = at(locked, i) - at(floating, i);
        bar(p, i, 0, v, v > 0 ? RED : GREEN);
    }
    curve(p, locked, '#fff');
    curve(p, floating, YELLOW);
    cross(p, 85);

    p = pane('active', { top: 99, bottom: 16.6, minor: 5, labels: [[100, '100', '', true], [50, '50']] });
    curve(p, active, '#ff0', 2);
    curve(p, [[0, 20], [85, 20]], CYAN, 2);
    cross(p, 85);

    const t = document.getElementById('dates');
    t.replaceChildren();
    foot(t, '日线', xScale(t).x, [[0, '2022/9'], [21, '10'], [37, '11'], [59, '12'], [81, '2023/1']]);
}

function drawPie() {
    const svg = document.getElementById('pie');
    const stops = [0, 11, 57, 123, 180, 241, 311, 355, 360];
    const colors = ['#ff6060', '#aa4040', '#803030', '#552020', '#005555', '#008080', '#00aaaa', '#00ffff'];
    const point = (deg) => [62 * Math.sin(deg * Math.PI / 180), -62 * Math.cos(deg * Math.PI / 180)].map((v) => v.toFixed(2)).join(' ');
    colors.forEach((fill, k) => {
        el(svg, 'path', { d: `M0 0L${point(stops[k])}A62 62 0 0 1 ${point(stops[k + 1])}z`, fill, stroke: '#a00000' });
    });
}

function draw() {
    drawIntraday();
    drawDaily();
}

drawPie();
draw();
window.addEventListener('resize', draw);
```
